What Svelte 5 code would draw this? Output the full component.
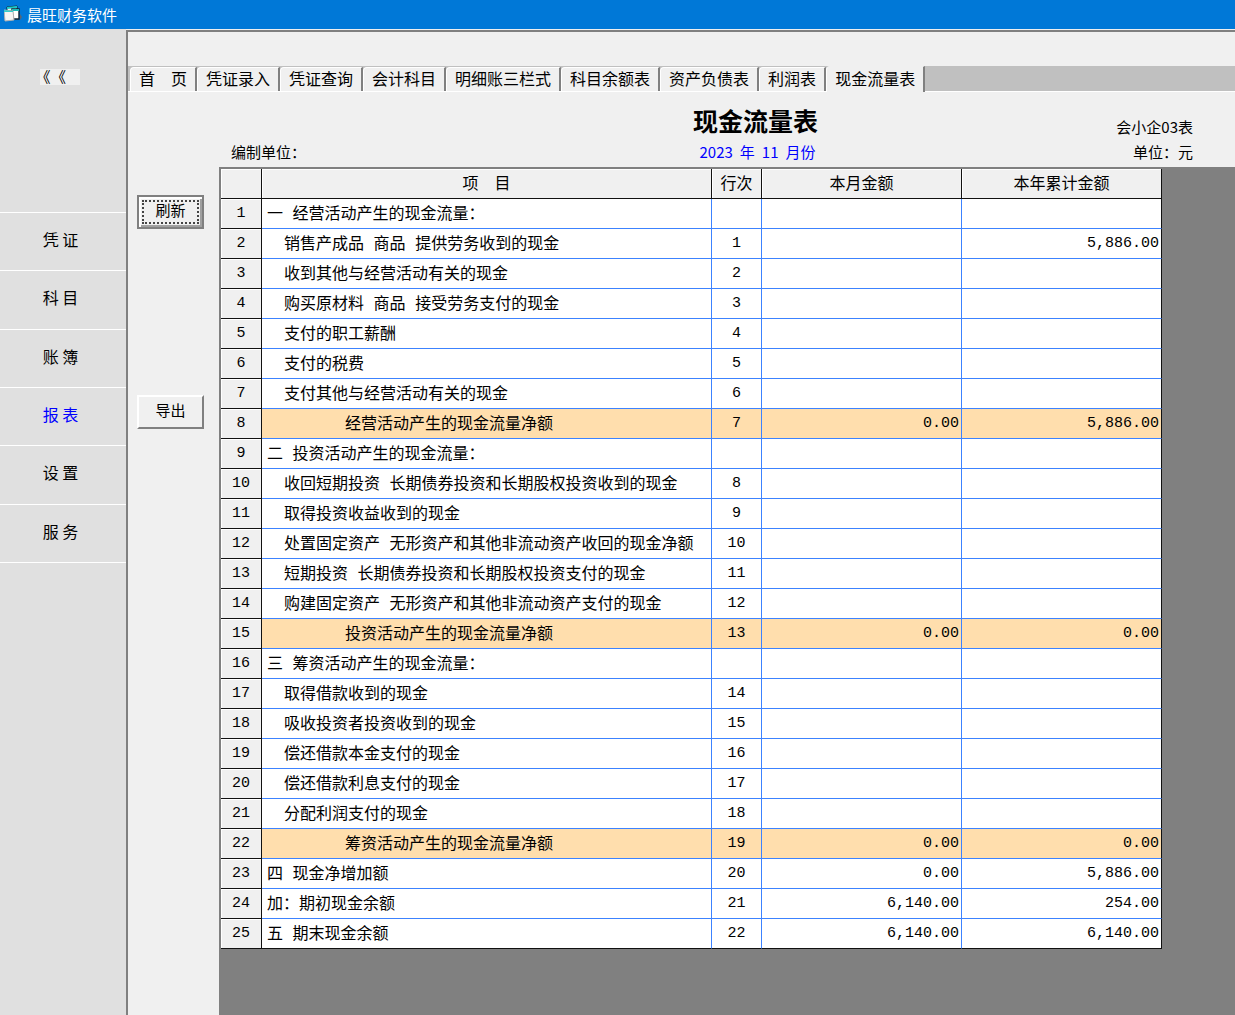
<!-- App.svelte -->
<script>
    let activeTab = $state('现金流量表');
    let activeMenu = $state('报 表');

    const menu = ['凭 证', '科 目', '账 簿', '报 表', '设 置', '服 务'];
    const tabs = [
        '首\u3000页',
        '凭证录入',
        '凭证查询',
        '会计科目',
        '明细账三栏式',
        '科目余额表',
        '资产负债表',
        '利润表',
        '现金流量表'
    ];

    // level: 0 = section, 1 = item, 2 = subtotal
    const rows = [
        { level: 0, name: '一 经营活动产生的现金流量：' },
        { level: 1, name: '销售产成品 商品 提供劳务收到的现金', line: 1, year: '5,886.00' },
        { level: 1, name: '收到其他与经营活动有关的现金', line: 2 },
        { level: 1, name: '购买原材料 商品 接受劳务支付的现金', line: 3 },
        { level: 1, name: '支付的职工薪酬', line: 4 },
        { level: 1, name: '支付的税费', line: 5 },
        { level: 1, name: '支付其他与经营活动有关的现金', line: 6 },
        { level: 2, name: '经营活动产生的现金流量净额', line: 7, month: '0.00', year: '5,886.00' },
        { level: 0, name: '二 投资活动产生的现金流量：' },
        { level: 1, name: '收回短期投资 长期债券投资和长期股权投资收到的现金', line: 8 },
        { level: 1, name: '取得投资收益收到的现金', line: 9 },
        { level: 1, name: '处置固定资产 无形资产和其他非流动资产收回的现金净额', line: 10 },
        { level: 1, name: '短期投资 长期债券投资和长期股权投资支付的现金', line: 11 },
        { level: 1, name: '购建固定资产 无形资产和其他非流动资产支付的现金', line: 12 },
        { level: 2, name: '投资活动产生的现金流量净额', line: 13, month: '0.00', year: '0.00' },
        { level: 0, name: '三 筹资活动产生的现金流量：' },
        { level: 1, name: '取得借款收到的现金', line: 14 },
        { level: 1, name: '吸收投资者投资收到的现金', line: 15 },
        { level: 1, name: '偿还借款本金支付的现金', line: 16 },
        { level: 1, name: '偿还借款利息支付的现金', line: 17 },
        { level: 1, name: '分配利润支付的现金', line: 18 },
        { level: 2, name: '筹资活动产生的现金流量净额', line: 19, month: '0.00', year: '0.00' },
        { level: 0, name: '四 现金净增加额', line: 20, month: '0.00', year: '5,886.00' },
        { level: 0, name: '加：期初现金余额', line: 21, month: '6,140.00', year: '254.00' },
        { level: 0, name: '五 期末现金余额', line: 22, month: '6,140.00', year: '6,140.00' }
    ];
</script>

<div class="window">
    <header class="titlebar">
        <svg width="19" height="18" viewBox="0 0 19 18" aria-hidden="true">
            <path d="M3 2l10-1v5H3z" fill="#e8f4f4" stroke="#123" />
            <path d="M3 2l10-1v2L3 4z" fill="#19c8c8" />
            <path d="M8 4l7 0v10H9z" fill="#fff" stroke="#102030" stroke-width="1.4" />
            <path d="M8 4h7v2H8z" fill="#19b8b8" />
            <path d="M0 5l9 1 1 9-9 1z" fill="#f4f4f4" stroke="#b0b0b0" />
            <path d="M0 5l9 1v1L0 7z" fill="#3cc" />
            <path d="M16 9l2 3-2 3z" fill="#567" />
        </svg>
        <span>晨旺财务软件</span>
    </header>

    <div class="body">
        <nav class="sidebar">
            <button class="collapse" aria-label="收起"><span>《</span><span>《</span></button>
            <div class="menu">
                {#each menu as item}
                    <button class:active={item === activeMenu} onclick={() => (activeMenu = item)}>{item}</button>
                {/each}
            </div>
        </nav>

        <main class="main">
            <div class="tabs" role="tablist">
                {#each tabs as tab}
                    <button
                        role="tab"
                        aria-selected={tab === activeTab}
                        class:active={tab === activeTab}
                        onclick={() => (activeTab = tab)}>{tab}</button>
                {/each}
            </div>

            <div class="page">
                <div class="actions">
                    <button class="default"><span>刷新</span></button>
                    <button><span>导出</span></button>
                </div>

                <section class="report">
                    <div class="heading">
                        <div class="left">编制单位：</div>
                        <div class="center">
                            <h1>现金流量表</h1>
                            <p class="period"><span>2023</span><span>年</span><span>11</span><span>月份</span></p>
                        </div>
                        <div class="right">
                            <div>会小企03表</div>
                            <div>单位：元</div>
                        </div>
                    </div>

                    <div class="grid">
                        <table>
                            <colgroup>
                                <col class="c-index" />
                                <col class="c-name" />
                                <col class="c-line" />
                                <col class="c-money" />
                                <col class="c-money" />
                            </colgroup>
                            <thead>
                                <tr>
                                    <th></th>
                                    <th>项{'\u3000'}目</th>
                                    <th>行次</th>
                                    <th>本月金额</th>
                                    <th>本年累计金额</th>
                                </tr>
                            </thead>
                            <tbody>
                                {#each rows as row, i}
                                    <tr class:subtotal={row.level === 2}>
                                        <th scope="row">{i + 1}</th>
                                        <td class="name level-{row.level}">{row.name}</td>
                                        <td class="line">{row.line ?? ''}</td>
                                        <td class="money">{row.month ?? ''}</td>
                                        <td class="money">{row.year ?? ''}</td>
                                    </tr>
                                {/each}
                            </tbody>
                        </table>
                    </div>
                </section>
            </div>
        </main>
    </div>
</div>

<style>
    :global(body) {
        margin: 0;
    }
    .window {
        min-height: 100vh;
        display: flex;
        flex-direction: column;
        background: #f0f0f0;
        color: #000;
        font-family: 'Liberation Mono', 'Noto Sans CJK SC', monospace;
        font-size: 16px;
    }
    button {
        border: 0;
        margin: 0;
        padding: 0;
        background: none;
        color: inherit;
        font: inherit;
    }

    .titlebar {
        display: flex;
        align-items: center;
        gap: 4px;
        height: 29px;
        padding-left: 4px;
        background: #0078d7;
        color: #fff;
        font-family: 'Noto Sans CJK SC', sans-serif;
        font-size: 15px;
        line-height: 20px;
    }
    .titlebar svg {
        margin-bottom: 2px;
    }
    .body {
        flex: 1;
        display: flex;
    }

    /* Left menu */
    .sidebar {
        width: 126px;
        flex: none;
        background: #e0e0e0;
    }
    .collapse {
        display: flex;
        align-items: center;
        gap: 8px;
        width: 40px;
        height: 16px;
        margin: 40px 0 127px 40px;
        padding-left: 3px;
        background: #f0f0f0;
        font-size: 15px;
        line-height: 20px;
    }
    .collapse span {
        font-family: 'Noto Sans CJK SC', sans-serif;
        font-feature-settings: 'halt';
    }
    .menu {
        display: grid;
        grid-template-rows: repeat(6, 1fr);
        height: 351px;
        border-top: 1px solid #fff;
        box-sizing: border-box;
    }
    .menu button {
        padding: 0 5px 5px 0;
        border-bottom: 1px solid #fff;
        font-family: 'Noto Sans CJK SC', sans-serif;
    }
    .menu .active {
        color: #00f;
    }

    .main {
        flex: 1;
        min-width: 0;
        display: flex;
        flex-direction: column;
        border: 2px solid #808080;
        border-width: 2px 0 0 2px;
        margin-top: 1px;
    }

    .tabs {
        display: flex;
        align-items: flex-end;
        height: 25px;
        margin-top: 34px;
        padding-left: 2px;
        background: #c0c0c0;
        border-bottom: 1px solid #fff;
    }
    .tabs button {
        height: 24px;
        padding: 3px 8px 0;
        border-left: 1px solid #fff;
        border-top: 1px solid #fff;
        border-right: 2px solid #808080;
        border-radius: 4px 0 0 0;
        background: #f0f0f0;
        line-height: 20px;
        white-space: nowrap;
    }
    .tabs .active {
        height: 26px;
        margin-bottom: -1px;
        border-top-color: #f0f0f0;
    }

    .page {
        flex: 1;
        display: flex;
    }
    .actions {
        width: 91px;
        flex: none;
        padding: 103px 0 0 9px;
        box-sizing: border-box;
    }
    .actions button {
        display: block;
        width: 67px;
        height: 34px;
        margin-bottom: 166px;
        padding: 2px;
        border: 2px solid;
        border-color: #fff #808080 #808080 #fff;
        font-size: 15px;
    }
    .actions span {
        display: block;
        padding-top: 2px;
        line-height: 24px;
    }
    .actions .default {
        border-color: #808080;
        box-shadow: inset 2px 2px #fff, inset -2px -2px #a0a0a0;
    }
    .actions .default span {
        border: 2px dotted #444;
        margin: 1px;
        line-height: 18px;
    }

    .report {
        flex: 1;
        min-width: 0;
        display: flex;
        flex-direction: column;
    }
    .heading {
        display: grid;
        grid-template-columns: 462px auto 1fr;
        align-items: end;
        height: 75px;
        padding: 0 42px 0 12px;
        font-size: 15px;
        line-height: 25px;
    }
    .heading > div {
        padding-bottom: 3px;
    }
    .heading .left {
        padding-bottom: 0;
    }
    .center {
        text-align: center;
    }
    h1 {
        margin: 0;
        font-size: 25px;
        line-height: 28px;
    }
    .period {
        display: flex;
        justify-content: center;
        gap: 7px;
        margin: 0;
        padding-left: 4px;
        color: #00f;
        font-family: 'Noto Sans CJK SC', sans-serif;
    }
    .right {
        text-align: right;
        font-family: 'Noto Sans CJK SC', sans-serif;
    }

    /* Grid control */
    .grid {
        flex: 1;
        border: 2px solid #808080;
        border-width: 2px 0 0 2px;
        background: #808080;
    }
    table {
        width: 941px;
        table-layout: fixed;
        border-collapse: separate;
        border-spacing: 0;
    }
    .c-index { width: 41px; }
    .c-name { width: 450px; }
    .c-line { width: 50px; }
    .c-money { width: 200px; }
    th,
    td {
        height: 30px;
        padding: 0;
        box-sizing: border-box;
        line-height: 29px;
        white-space: nowrap;
    }
    th {
        background: #f0f0f0;
        border-right: 1px solid #111;
        border-bottom: 1px solid #111;
        box-shadow: inset 1px 1px #fff;
        font-weight: normal;
    }
    tbody th {
        font-size: 15px;
    }
    td {
        background: #fff;
        border-right: 1px solid #3c82ff;
        border-bottom: 1px solid #3c82ff;
    }
    td:last-child {
        border-right-color: #111;
    }
    tr:last-child td {
        border-bottom-color: #111;
    }
    .subtotal td {
        background: #ffdead;
    }
    thead th,
    .name {
        padding-top: 3px;
        line-height: 24px;
    }
    .level-0 { padding-left: 5px; }
    .level-1 { padding-left: 22px; }
    .level-2 { padding-left: 83px; }
    .line {
        text-align: center;
        font-size: 15px;
    }
    .money {
        padding-right: 2px;
        text-align: right;
        font-size: 15px;
    }
</style>
